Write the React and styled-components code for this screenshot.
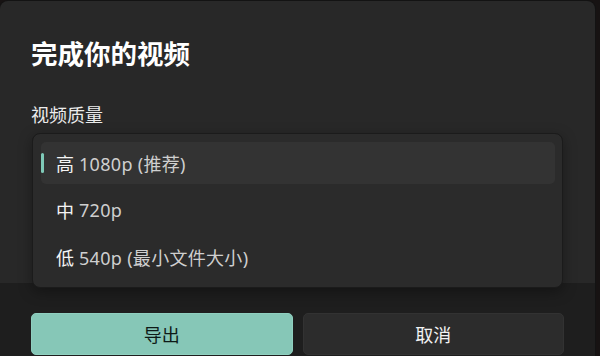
import styled, { createGlobalStyle } from 'styled-components';

const GlobalStyle = createGlobalStyle`
  html, body {
    margin: 0;
    padding: 0;
    background: #171313;
  }
  body {
    width: 600px;
    height: 356px;
    overflow: hidden;
    font-family: "Noto Sans", "Noto Sans CJK SC", sans-serif;
  }
`;

export const Dialog = styled.div`
  width: 595px;
  margin-top: 1px;
  background-color: #282828;
  border-radius: 8px 8px 0 0;
  box-shadow: 0 0 0 1px #131313;
  overflow: hidden;
  display: flex;
  flex-direction: column;
`;

export const DialogBody = styled.div`
  display: flex;
  flex-direction: column;
  padding: 34px 31px 0 31px;
  height: 248px;
`;

export const StyledTitleH1 = styled.h1`
  margin: 0;
  font-family: "Noto Sans CJK SC", "Noto Sans", sans-serif;
  font-size: 26.5px;
  font-weight: 700;
  line-height: 36px;
  color: #ffffff;
`;

export const FieldLabel = styled.div`
  margin-top: 31px;
  font-family: "Noto Sans CJK SC", "Noto Sans", sans-serif;
  font-size: 18px;
  line-height: 24px;
  color: #ececec;
`;

export const Flyout = styled.ul`
  list-style: none;
  margin: 7px 1px 0 1px;
  padding: 8px 7px 9px 8px;
  display: flex;
  flex-direction: column;
  gap: 5px;
  background-color: #2b2b2b;
  border: 1px solid #1b1b1b;
  border-radius: 8px;
  box-shadow: 0 4px 14px rgba(0, 0, 0, 0.35);
  position: relative;
  z-index: 1;
`;

export const Option = styled.li`
  position: relative;
  height: 42px;
  display: flex;
  align-items: center;
  padding-left: 15px;
  border-radius: 5px;
  background-color: ${(props) => (props.selected ? '#333333' : 'transparent')};
  font-size: 18px;
  color: #cfcfcf;

  &::before {
    content: '';
    display: ${(props) => (props.selected ? 'block' : 'none')};
    position: absolute;
    left: 0;
    top: 11px;
    width: 3px;
    height: 20px;
    border-radius: 2px;
    background-color: #7fcab8;
  }
`;

export const Level = styled.span`
  font-family: "Noto Sans CJK SC", sans-serif;
  color: #f4f4f4;
  margin-right: 5px;
`;

export const Detail = styled.span`
  font-family: "Noto Sans", "Noto Sans CJK SC", sans-serif;
  letter-spacing: 0.3px;
`;

export const Footer = styled.div`
  background-color: #1e1e1e;
  padding: 30px 31px 1px 31px;
  display: grid;
  grid-template-columns: 1fr 1fr;
  gap: 10px;
`;

export const StyledButton = styled.button`
  height: 42px;
  border-radius: 5px;
  font-family: "Noto Sans CJK SC", sans-serif;
  font-size: 18px;
  cursor: pointer;
  border: 1px solid ${(props) => (props.primary ? '#8fcfbf' : '#323232')};
  background-color: ${(props) => (props.primary ? '#86c7b7' : '#2c2c2c')};
  color: ${(props) => (props.primary ? '#0e1a17' : '#f2f2f2')};
`;

const qualities = [
  { level: '高', detail: '1080p (推荐)', selected: true },
  { level: '中', detail: '720p' },
  { level: '低', detail: '540p (最小文件大小)' },
];

export default function App() {
  return (
    <>
      <GlobalStyle />
      <Dialog>
        <DialogBody>
          <StyledTitleH1>完成你的视频</StyledTitleH1>
          <FieldLabel>视频质量</FieldLabel>
          <Flyout>
            {qualities.map((q) => (
              <Option key={q.level} selected={q.selected}>
                <Level>{q.level}</Level>
                <Detail>{q.detail}</Detail>
              </Option>
            ))}
          </Flyout>
        </DialogBody>
        <Footer>
          <StyledButton primary>导出</StyledButton>
          <StyledButton>取消</StyledButton>
        </Footer>
      </Dialog>
    </>
  );
}
